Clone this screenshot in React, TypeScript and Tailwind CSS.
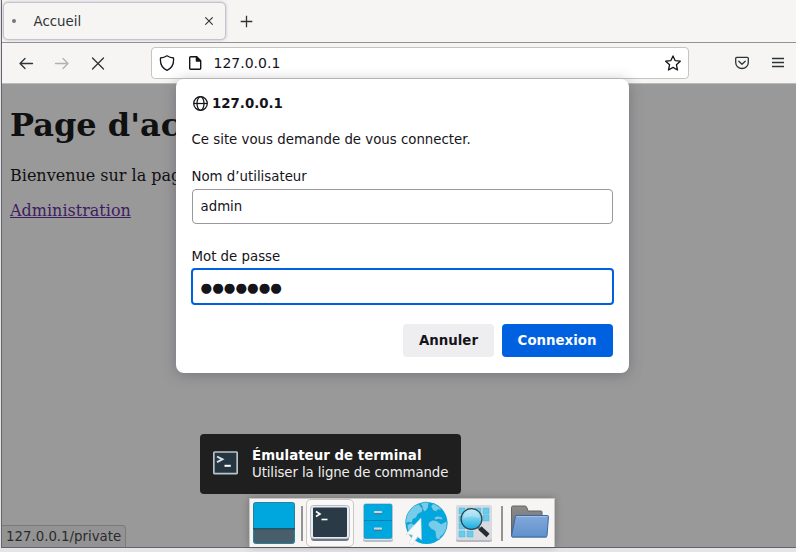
import React from "react";

function TabBar() {
  return (
    <div className="flex h-[43px] items-start border-b border-[#929292] bg-[#f6f5f4]">
      <div className="mt-[2px] ml-px flex h-[38px] w-[223px] items-center rounded-[5px] border border-[#c3c4ce] bg-[#f6f5f3] shadow-[0_0_3px_rgba(90,90,120,0.4)]">
        <span className="ml-[8px] h-[4px] w-[4px] rounded-full bg-[#75777a]" />
        <span className="ml-[17.5px] pt-[2px] text-[13.33px] leading-[18px] text-[#2e3436]">Accueil</span>
        <svg className="mr-[12px] ml-auto" width="8" height="8" viewBox="0 0 8 8" stroke="#2e3436" strokeWidth="1.1" fill="none">
          <path d="M.3.3 7.700 7.700M7.700.3.3 7.700" />
        </svg>
      </div>
      <svg className="mt-[15px] ml-[14px]" width="13" height="13" viewBox="0 0 13 13" stroke="#2e3436" strokeWidth="1.3" fill="none">
        <path d="M6.5.7v11.6M.7 6.5h11.6" />
      </svg>
    </div>
  );
}

function NavBar() {
  return (
    <div className="flex h-[41px] items-center border-b border-[#bdbab7] bg-[#f6f5f4] text-[#2e3436]">
      <svg className="ml-[16px]" width="16" height="14" viewBox="0 0 16 14" fill="none" stroke="currentColor" strokeWidth="1.3" strokeLinecap="round" strokeLinejoin="round">
        <path d="M14.500 7.500h-12M7 2.500 2 7.500l5 5" />
      </svg>
      <svg className="ml-[20px] text-[#b0b1b1]" width="16" height="14" viewBox="0 0 16 14" fill="none" stroke="currentColor" strokeWidth="1.3" strokeLinecap="round" strokeLinejoin="round">
        <path d="M1.500 7.500h12M9 2.500l5 5-5 5" />
      </svg>
      <svg className="ml-[20px]" width="16" height="14" viewBox="0 0 16 14" fill="none" stroke="currentColor" strokeWidth="1.3" strokeLinecap="round">
        <path d="m2.500 2 11 11M13.500 2l-11 11" />
      </svg>
      <div className="ml-[45px] flex h-[32px] w-[538px] items-center rounded-[4px] border border-[#c7c3c0] bg-white">
        <svg className="ml-[7px] text-[#15141a]" width="16" height="16" viewBox="0 0 16 16" fill="none" stroke="currentColor" strokeWidth="1.3" strokeLinejoin="round">
          <path d="M8 .8c2 1.4 4 2 6.5 2.2C15 8 13.2 13 8 15.3 2.800 13 1 8 1.500 3 4 2.800 6 2.200 8 .8Z" />
        </svg>
        <svg className="ml-[12px] text-[#15141a]" width="16" height="16" viewBox="0 0 16 16" fill="none" stroke="currentColor" strokeWidth="1.4" strokeLinejoin="round">
          <path d="M3.700 1.700h6l4 4v7.600q0 1-1 1h-9q-1 0-1-1V2.700q0-1 1-1Z" />
          <path d="M9.400 2v4h4Z" fill="currentColor" />
        </svg>
        <span className="ml-[10.5px] text-[14px] leading-[18px] text-[#15141a]">127.0.0.1</span>
        <svg className="mr-[7px] ml-auto text-[#15141a]" width="16" height="16" viewBox="0 0 16 16" fill="none" stroke="currentColor" strokeWidth="1.3" strokeLinejoin="round">
          <path d="m8 .9 2.100 4.700 5.200.6-3.900 3.500 1.100 5.300L8 12.400 3.500 15l1.100-5.300L.7 6.200l5.200-.6Z" />
        </svg>
      </div>
      <svg className="ml-[46px]" width="14" height="14" viewBox="0 0 14 14" fill="none" stroke="currentColor" strokeWidth="1.3" strokeLinecap="round" strokeLinejoin="round">
        <path d="M1.700 1.300h10.600q1 0 1 1V6.500a6.300 6.000 0 0 1-12.600 0V2.300q0-1 1-1Z" />
        <path d="m3.800 5.300 3.200 3 3.200-3" />
      </svg>
      <svg className="ml-[23px]" width="12" height="12" viewBox="0 0 12 12" stroke="currentColor" strokeWidth="1.3">
        <path d="M0 1.500h12M0 5.500h12M0 9.500h12" />
      </svg>
    </div>
  );
}

function LoginDialog() {
  return (
    <div className="absolute top-[79px] left-[176px] flex h-[294px] w-[453px] flex-col rounded-[8px] bg-white px-[16px] text-[13.33px] leading-[18px] text-[#15141a] shadow-[0_2px_14px_rgba(58,57,68,0.35)]">
      <div className="mt-[16px] flex items-center font-bold">
        <svg className="-mt-px mr-[4px] ml-px" width="15" height="15" viewBox="0 0 15 15" fill="none" stroke="currentColor" strokeWidth="1.25">
          <circle cx="7.500" cy="7.500" r="6.800" />
          <ellipse cx="7.500" cy="7.500" rx="3.500" ry="6.800" />
          <path d="M.7 7.500h13.600" />
        </svg>
        127.0.0.1
      </div>
      <p className="mt-[18px] -ml-[0.5px]">Ce site vous demande de vous connecter.</p>
      <label className="mt-[19px] -ml-[0.5px]">Nom d’utilisateur</label>
      <div className="mt-[3px] flex h-[35px] w-[421px] shrink-0 items-center rounded-[4px] border border-[#98989d] px-[7.5px]">admin</div>
      <label className="mt-[24px] -ml-[0.5px]">Mot de passe</label>
      <div className="mt-[2px] -ml-px flex h-[37px] w-[423px] shrink-0 items-center rounded-[4px] border-2 border-[#0061e0] px-[7.5px] pt-[2px]">●●●●●●●</div>
      <div className="mt-[19px] flex justify-end gap-[8px] font-bold">
        <button className="h-[33px] w-[91px] rounded-[4px] bg-[#eeeef0]">Annuler</button>
        <button className="h-[33px] w-[111px] rounded-[4px] bg-[#0061e0] pr-px text-[#fbfbfe]">Connexion</button>
      </div>
    </div>
  );
}

function LauncherTip() {
  return (
    <div className="absolute top-[434px] left-[200px] flex h-[60px] w-[261px] items-center rounded-[4px] bg-[#1f1f1f] text-white">
      <svg className="-mt-[2px] ml-[13px]" width="25" height="24" viewBox="0 0 25 24">
        <rect x=".8" y="1" width="23.400" height="21.700" rx="1" fill="#263641" stroke="#bac5ca" strokeWidth="1.700" />
        <path d="m4 5.500 5.500 2.800L4 11.200" fill="none" stroke="#dce1e3" strokeWidth="1.900" />
        <path d="M11.500 14.800h6.300" stroke="white" strokeWidth="2" />
      </svg>
      <div className="ml-[14px] text-[13.33px] leading-[17px] whitespace-nowrap">
        <div className="font-bold tracking-[0.03px]">Émulateur de terminal</div>
        <div className="tracking-[-0.11px] text-[#eeeeec]">Utiliser la ligne de commande</div>
      </div>
    </div>
  );
}

function DesktopIcon() {
  return (
    <svg width="42" height="42" viewBox="0 0 42 42">
      <rect x=".5" y=".5" width="41" height="41" rx="2" fill="#00a7df" stroke="#287f9e" />
      <path d="M1 27h40v12q0 2-2 2H3q-2 0-2-2Z" fill="#485e6a" />
      <path d="M0 26.800h42" stroke="#203947" />
    </svg>
  );
}

function TerminalIcon() {
  return (
    <svg width="40" height="38" viewBox="0 0 40 38">
      <rect x="1" y="3" width="38" height="34" rx="3" fill="#6d7986" />
      <rect x=".5" y="1.500" width="39" height="33" rx="3" fill="#e8ebf2" stroke="#b6bec8" />
      <rect x="3" y="3.500" width="34" height="29.500" rx="1" fill="#2a3b47" />
      <path d="m6 7.500 4 2.500L6 12.500" fill="none" stroke="white" strokeWidth="1.600" />
      <path d="M11.500 15.500h6" stroke="white" strokeWidth="1.600" />
    </svg>
  );
}

function CabinetIcon() {
  return (
    <svg width="30" height="39" viewBox="0 0 30 39">
      <rect x="0" y="3" width="30" height="36" rx="2.500" fill="#b9bfc9" />
      <rect x="0" y="1" width="30" height="36" rx="2.500" fill="#e0e4eb" />
      <rect x="1" y="1" width="28" height="34.500" rx="1.500" fill="#00a8e0" stroke="#3489a9" strokeWidth=".6" />
      <path d="M1 17.500h28" stroke="#087fac" />
      <rect x="11" y="8" width="8" height="2.200" rx=".6" fill="#d3d4d8" />
      <rect x="11" y="24.500" width="8" height="2.200" rx=".6" fill="#d3d4d8" />
      <path d="M11 10.800h8M11 27.300h8" stroke="#467081" />
    </svg>
  );
}

function GlobeIcon() {
  return (
    <svg width="43" height="44" viewBox="0 0 43 44">
      <circle cx="21.500" cy="22" r="21" fill="#00a8df" />
      <g fill="#75cdeb" stroke="#168db5" strokeWidth=".5" strokeLinejoin="round">
        <path d="M6 8Q9 4 14 3l2 3 2 1-1 4-4 2-2 4-3 1-1 4-4-1-2 2Q0 14 6 8Z" />
        <path d="m15 2.500 6-1.500 3 1-1 5-3 4-2-2-1-4Z" />
        <path d="M28 2.500q6 2 9 7l-4-1-2 2-3-1-2-4Z" />
        <path d="m29 17 3-2 5 1 1 3-4-1-4 1Z" />
        <path d="m24 21 4-2 4 1 4 3 6-3q1 8-4 14l-2 1-2 4-3-2-1-7-4-2-3-4Z" />
        <path d="m2 24 4-2 6 3 5 5-2 6-5 4Q3 34 2 24Z" />
      </g>
      <path d="m16 17 .5 22-4-3.500-4.500 7.500q-2 1-4-1l4-8-7-1Z" fill="#f8f9fa" stroke="#cdd5d9" strokeWidth=".5" />
    </svg>
  );
}

function SearchAppIcon() {
  return (
    <svg width="36" height="37" viewBox="0 0 36 37">
      <rect y="2" width="36" height="35" rx="2" fill="#b6b9c0" />
      <rect width="36" height="35" rx="2" fill="#d8dae0" />
      <g fill="#68ccec" stroke="#43b9df" strokeWidth=".5">
        <path d="M3 3h6v6H3zM11 3h6v6h-6zM19 3h6v6h-6zM27 3h6v6h-6zM3 11h6v6H3zM27 10h6v6h-6zM3 18h6v6H3zM3 26h6v6H3zM11 26h6v6h-6z" />
      </g>
      <path d="m22 22 4 4" stroke="#71797c" strokeWidth="3" />
      <path d="m24 23 8 7.500" stroke="#272c30" strokeWidth="4.500" />
      <circle cx="15.500" cy="14" r="10.400" fill="url(#lens)" stroke="#294654" strokeWidth="1.300" />
      <path d="M7 13q2-7 9-7 7 1 8 7Q15 10 7 13Z" fill="#c4edfa" opacity=".4" />
      <defs><linearGradient id="lens" x2="0" y2="1"><stop stopColor="#d2edf4" /><stop offset="1" stopColor="#10ade2" /></linearGradient></defs>
    </svg>
  );
}

function FolderIcon() {
  return (
    <svg width="39" height="34" viewBox="0 0 39 34">
      <path d="M2 31h34l1 2H2Z" fill="#b9bac1" />
      <path d="M1.500 31V2.500q0-1.500 1.500-1.500h12q1.500 0 2 2l1 3h13q1 0 1 1v24Z" fill="url(#folderback)" stroke="#646464" />
      <path d="M6.500 10.500h31q1 0 1 1l-1.500 19q0 1.500-1.500 1.500H3q-1.500 0-1.500-1L5.300 12q0-1.500 1.200-1.500Z" fill="url(#folderfront)" stroke="#3968a6" />
      <path d="M6.500 11.500h30" stroke="#adc8e8" strokeWidth=".8" />
      <defs>
        <linearGradient id="folderback" x2="0" y2="1"><stop stopColor="#8c8c8c" /><stop offset="1" stopColor="#686868" /></linearGradient>
        <linearGradient id="folderfront" x2="0" y2="1"><stop stopColor="#82a9d9" /><stop offset="1" stopColor="#5f91cc" /></linearGradient>
      </defs>
    </svg>
  );
}

function Dock() {
  return (
    <div className="absolute top-[498px] left-[249px] flex h-[49px] w-[306px] items-start border border-b-0 border-[#c8c5c2] bg-[#f6f5f4] pt-[3px] shadow-[0_0_7px_rgba(0,0,0,0.25)]">
      <div className="ml-[3px]"><DesktopIcon /></div>
      <div className="mt-[4px] ml-[6px] h-[35px] w-[2px] bg-[#949393]" />
      <div className="-mt-[3px] ml-[3px] flex h-[48px] w-[48px] items-center justify-center rounded-[5px] border border-[#cbc7c3] bg-[#faf9f8]"><TerminalIcon /></div>
      <div className="mt-[1px] ml-[9px]"><CabinetIcon /></div>
      <div className="-mt-px ml-[11.5px]"><GlobeIcon /></div>
      <div className="mt-[3px] ml-[8.5px]"><SearchAppIcon /></div>
      <div className="mt-[4px] ml-[9px] h-[35px] w-[2px] bg-[#949393]" />
      <div className="mt-[3px] ml-[7px]"><FolderIcon /></div>
    </div>
  );
}

export default function App() {
  return (
    <div className="relative h-[552px] w-[796px] overflow-hidden bg-[#e5e4e8] font-['DejaVu_Sans',sans-serif]">
      <div className="ml-px flex h-[548px] flex-col border-b border-l border-[#66636a]">
        <TabBar />
        <NavBar />
        <main className="flex flex-1 flex-col bg-[#99999a] px-[8px] font-['DejaVu_Serif',serif] text-[16px] leading-[19px] whitespace-nowrap text-[#101011]">
          <h1 className="mt-[22px] text-[32px] leading-[38px] font-bold">Page d'ac</h1>
          <p className="mt-[22px]">Bienvenue sur la pag</p>
          <a className="mt-[16px] self-start text-[#3f1b60] underline" href="#private">Administration</a>
          <div className="mt-auto -ml-[8px] flex h-[22px] w-[124px] items-center rounded-tr-[4px] border border-b-0 border-l-0 border-[#7a797b] bg-[#949394] pl-[4px] font-['DejaVu_Sans',sans-serif] text-[13.33px] text-[#292c2e]">127.0.0.1/private</div>
        </main>
      </div>
      <LoginDialog />
      <LauncherTip />
      <Dock />
    </div>
  );
}
